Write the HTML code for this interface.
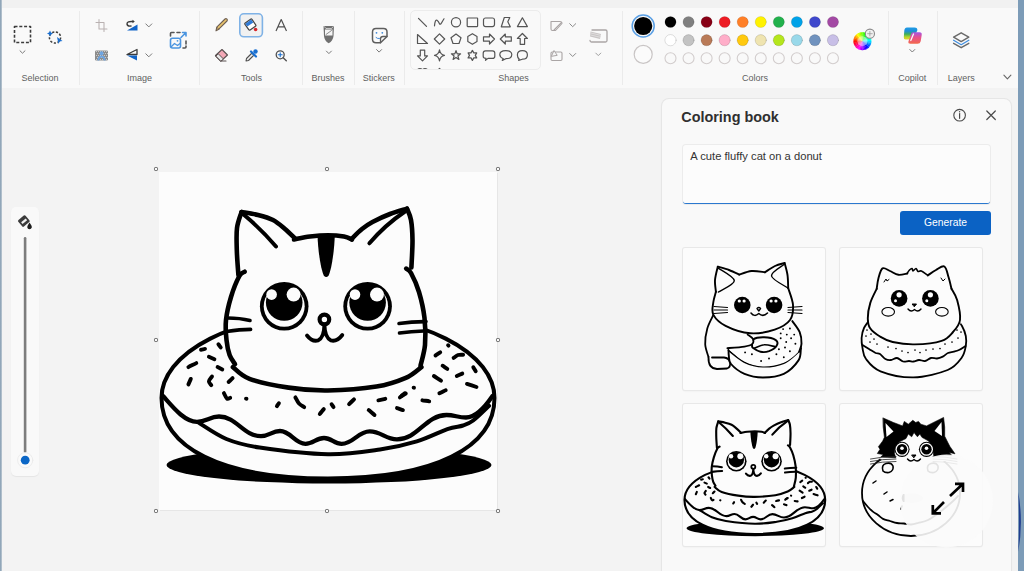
<!DOCTYPE html>
<html><head><meta charset="utf-8">
<style>
html,body{margin:0;padding:0;width:1024px;height:571px;overflow:hidden;background:#f3f3f3;font-family:"Liberation Sans",sans-serif;}
.abs{position:absolute;}
#topstrip{left:0;top:0;width:1024px;height:8px;background:#f1f1f1;}
#toolbar{left:0;top:8px;width:1024px;height:80px;background:#f9f9f9;}
.sep{position:absolute;top:10.5px;width:1px;height:74px;background:#ebebeb;}
.lbl{position:absolute;top:72.5px;font-size:9px;color:#5f5f5f;white-space:nowrap;transform:translateX(-50%);}
#leftedge{left:0;top:0;width:2px;height:571px;background:linear-gradient(90deg,#90a6b9 0%,#93a8ba 55%,#d3dae0 100%);}
#rightedge{left:1018px;top:0;width:6px;height:571px;background:#7d9cb8;}
#canvas{left:159px;top:172px;width:338px;height:338px;background:#fcfcfc;box-shadow:1px 1px 0 0 #e6e6e6;}
.handle{position:absolute;width:2px;height:2px;border:1.8px solid #676767;background:#fafafa;border-radius:1.2px;}
#slider{left:11px;top:207px;width:28px;height:269px;background:#f9f9f9;border-radius:5px;box-shadow:0 1px 1px rgba(0,0,0,0.06);}
#panel{left:662px;top:99px;width:349px;height:480px;background:#f9f9f9;border-radius:7px;box-shadow:0 0 0 1px #e6e6e6, 0 1px 3px rgba(0,0,0,0.05);}
#title{left:681.3px;top:108.8px;font-size:14.4px;font-weight:bold;color:#303030;letter-spacing:0px;}
#ta{left:683px;top:145px;width:307px;height:58px;background:#fcfcfc;border-radius:3px;box-shadow:0 0 0 1px #ececec;border-bottom:1.5px solid #2a78cf;}
#tatext{left:690.3px;top:150px;font-size:11.2px;color:#333;}
#gen{left:900px;top:211px;width:91px;height:24px;background:#0b62c4;border-radius:3px;color:#fff;font-size:10.3px;text-align:center;line-height:24px;}
.thumb{position:absolute;width:142px;height:142px;background:#fcfcfc;border-radius:2px;box-shadow:0 0 0 1px #e8e8e8, 0 1px 2px rgba(0,0,0,0.08);}
svg{position:absolute;left:0;top:0;}
.t3 path{stroke-width:5px;}
</style></head>
<body>
<div id="topstrip" class="abs"></div>
<div id="toolbar" class="abs"></div>
<div class="sep" style="left:79px"></div>
<div class="sep" style="left:199px"></div>
<div class="sep" style="left:302px"></div>
<div class="sep" style="left:354px"></div>
<div class="sep" style="left:404px"></div>
<div class="sep" style="left:622px"></div>
<div class="sep" style="left:888px"></div>
<div class="sep" style="left:937px"></div>
<div class="lbl" style="left:40px">Selection</div>
<div class="lbl" style="left:139.4px">Image</div>
<div class="lbl" style="left:251.4px">Tools</div>
<div class="lbl" style="left:328px">Brushes</div>
<div class="lbl" style="left:378.8px">Stickers</div>
<div class="lbl" style="left:513.4px">Shapes</div>
<div class="lbl" style="left:755px">Colors</div>
<div class="lbl" style="left:912.2px">Copilot</div>
<div class="lbl" style="left:961.3px">Layers</div>
<div id="leftedge" class="abs"></div>
<div id="rightedge" class="abs"></div>

<div id="canvas" class="abs"></div>
<div class="handle" style="left:153.7px;top:167.2px"></div>
<div class="handle" style="left:325.2px;top:167.2px"></div>
<div class="handle" style="left:496.0px;top:167.2px"></div>
<div class="handle" style="left:153.7px;top:338.2px"></div>
<div class="handle" style="left:496.0px;top:338.2px"></div>
<div class="handle" style="left:153.7px;top:508.9px"></div>
<div class="handle" style="left:325.2px;top:508.9px"></div>
<div class="handle" style="left:496.0px;top:508.9px"></div>

<div id="slider" class="abs"></div>

<div id="panel" class="abs"></div>
<div id="title" class="abs">Coloring book</div>
<div id="ta" class="abs"></div>
<div id="tatext" class="abs">A cute fluffy cat on a donut</div>
<div id="gen" class="abs">Generate</div>
<div class="thumb" style="left:683px;top:248px"></div>
<div class="thumb" style="left:840px;top:248px"></div>
<div class="thumb" style="left:683px;top:404px"></div>
<div class="thumb" style="left:840px;top:404px"></div>

<svg width="1024" height="571" viewBox="0 0 1024 571" stroke-linecap="round" stroke-linejoin="round">
<rect x="14.5" y="26.5" width="16" height="16" fill="none" stroke="#3c3c3c" stroke-width="1.6" stroke-dasharray="3,1.8" stroke-linecap="butt"/>
<path d="M20.0,50.8 L22.5,53.2 L25.0,50.8" fill="none" stroke="#7a7a7a" stroke-width="1"/>
<circle cx="55" cy="37.5" r="5.6" fill="none" stroke="#3c3c3c" stroke-width="1.5" stroke-dasharray="2.2,1.6" stroke-linecap="butt"/>
<path d="M50,30.5 L51,32.5 L53,33.5 L51,34.5 L50,36.5 L49,34.5 L47,33.5 L49,32.5Z" fill="#1a6fd0"/>
<path d="M57,37 L62.5,41 L59.5,41.5 L58.5,44 Z" fill="#1a6fd0"/>
<path d="M99,19.5 L99,29 L107,29 M96,22.5 L104,22.5 L104,31.5" fill="none" stroke="#b9b1b1" stroke-width="1.05"/>
<path d="M127,30.5 L137.5,30.5 L137.5,24.5 Z" fill="#1164c8"/>
<path d="M133,21.5 Q127,21 127,24 Q127.5,26.5 131,26" fill="none" stroke="#3a3a3a" stroke-width="1.4"/>
<path d="M132.5,19.8 L134.8,21.5 L132.5,23.2Z" fill="#3a3a3a"/>
<path d="M145.8,23.9 L148.8,26.9 L151.8,23.9" fill="none" stroke="#7a7a7a" stroke-width="1"/>
<rect x="95" y="50.5" width="13" height="10" fill="#8c8c8c" rx="1.2"/>
<rect x="96.0" y="51.0" width="1" height="1" fill="#c9c9c9"/>
<rect x="98.0" y="51.0" width="1" height="1" fill="#c9c9c9"/>
<rect x="100.0" y="51.0" width="1" height="1" fill="#c9c9c9"/>
<rect x="102.0" y="51.0" width="1" height="1" fill="#c9c9c9"/>
<rect x="104.0" y="51.0" width="1" height="1" fill="#c9c9c9"/>
<rect x="106.0" y="51.0" width="1" height="1" fill="#c9c9c9"/>
<rect x="97.0" y="53.0" width="1" height="1" fill="#c9c9c9"/>
<rect x="99.0" y="53.0" width="1" height="1" fill="#c9c9c9"/>
<rect x="101.0" y="53.0" width="1" height="1" fill="#c9c9c9"/>
<rect x="103.0" y="53.0" width="1" height="1" fill="#c9c9c9"/>
<rect x="105.0" y="53.0" width="1" height="1" fill="#c9c9c9"/>
<rect x="107.0" y="53.0" width="1" height="1" fill="#c9c9c9"/>
<rect x="96.0" y="55.0" width="1" height="1" fill="#c9c9c9"/>
<rect x="98.0" y="55.0" width="1" height="1" fill="#c9c9c9"/>
<rect x="100.0" y="55.0" width="1" height="1" fill="#c9c9c9"/>
<rect x="102.0" y="55.0" width="1" height="1" fill="#c9c9c9"/>
<rect x="104.0" y="55.0" width="1" height="1" fill="#c9c9c9"/>
<rect x="106.0" y="55.0" width="1" height="1" fill="#c9c9c9"/>
<rect x="97.0" y="57.0" width="1" height="1" fill="#c9c9c9"/>
<rect x="99.0" y="57.0" width="1" height="1" fill="#c9c9c9"/>
<rect x="101.0" y="57.0" width="1" height="1" fill="#c9c9c9"/>
<rect x="103.0" y="57.0" width="1" height="1" fill="#c9c9c9"/>
<rect x="105.0" y="57.0" width="1" height="1" fill="#c9c9c9"/>
<rect x="107.0" y="57.0" width="1" height="1" fill="#c9c9c9"/>
<rect x="96.0" y="59.0" width="1" height="1" fill="#c9c9c9"/>
<rect x="98.0" y="59.0" width="1" height="1" fill="#c9c9c9"/>
<rect x="100.0" y="59.0" width="1" height="1" fill="#c9c9c9"/>
<rect x="102.0" y="59.0" width="1" height="1" fill="#c9c9c9"/>
<rect x="104.0" y="59.0" width="1" height="1" fill="#c9c9c9"/>
<rect x="106.0" y="59.0" width="1" height="1" fill="#c9c9c9"/>
<circle cx="101.5" cy="53.3" r="2" fill="#6fa5e0"/>
<path d="M97.5,60.5 Q97.5,55.5 101.5,55.5 Q105.5,55.5 105.5,60.5 L103.7,60.5 Q103.7,57.5 101.5,57.5 Q99.3,57.5 99.3,60.5Z" fill="#6fa5e0"/>
<path d="M137,49.5 L137,54.5 L127,54.5 Z" fill="none" stroke="#3a3a3a" stroke-width="1.3"/>
<path d="M127,55.5 L137,55.5 L137,60.5 Z" fill="#1164c8"/>
<path d="M145.8,53.8 L148.8,56.8 L151.8,53.8" fill="none" stroke="#7a7a7a" stroke-width="1"/>
<path d="M170.5,36 L170.5,33.5 Q170.5,32.5 171.5,32.5 L174,32.5 M177,32.5 L180,32.5 M186,41 L186,44 M186,46 L186,47 Q186,48 185,48 L183,48" fill="none" stroke="#555" stroke-width="1.6"/>
<rect x="170.5" y="38.3" width="10" height="9.7" rx="2" fill="none" stroke="#4b95e0" stroke-width="1.6"/>
<path d="M171.5,46.5 L174.5,43.5 L177.5,45.5 L180,43.5" fill="none" stroke="#4b95e0" stroke-width="1.3"/>
<circle cx="177.5" cy="40.8" r="0.9" fill="#4b95e0"/>
<path d="M181,37.5 L186,32.5 M182.5,32.5 L186,32.5 L186,36" fill="none" stroke="#4b95e0" stroke-width="1.6"/>
<rect x="239.8" y="13.8" width="22.6" height="23" rx="4" fill="#f1f1f1" stroke="#7fb2e6" stroke-width="1.6"/>
<path d="M216,30.8 L216.8,27.2 L225,19 Q226,18.2 227,19.2 Q227.8,20.2 227,21 L218.8,29.2 Z" fill="#e9c46d" stroke="#6e5f52" stroke-width="1.1"/>
<path d="M216.8,27.2 L218.8,29.2" stroke="#6e5f52" stroke-width="0.9"/>
<g transform="rotate(-35 250 24.5)"><rect x="246" y="20.5" width="8.5" height="8.5" rx="1" fill="#fff" stroke="#444" stroke-width="1.2"/><rect x="246.6" y="21.2" width="7.3" height="3.5" fill="#2f7ad6"/></g>
<circle cx="255.6" cy="29.5" r="1.8" fill="#d8252a"/>
<path d="M276,31 L281.2,19.5 L286.5,31 M278,26.8 L284.5,26.8" fill="none" stroke="#505050" stroke-width="1.2" stroke-linecap="butt"/>
<path d="M215.5,55.5 L222,49.5 L227.5,55 L221,61 Z" fill="#f2a8b6" stroke="#5a5050" stroke-width="1.1"/>
<path d="M215.5,55.5 L219,59 L221,61 L226,61" fill="none" stroke="#5a5050" stroke-width="1.1"/>
<path d="M216,56 L218.3,53.8 L223.5,59 L221,61 Z" fill="#e8e8e8" stroke="#5a5050" stroke-width="1"/>
<path d="M246,61 L246.5,58.5 L252,53 L254,55 L248.5,60.5 Z" fill="#f0f0f0" stroke="#505050" stroke-width="1.1"/>
<path d="M251,51.5 L256,56.5" stroke="#1a6fd0" stroke-width="2.2"/>
<circle cx="255.5" cy="51.5" r="2.2" fill="#1a6fd0"/>
<circle cx="280.2" cy="54.8" r="4" fill="none" stroke="#505050" stroke-width="1.3"/>
<path d="M283.2,57.8 L286.3,60.8" stroke="#505050" stroke-width="1.4"/>
<path d="M280.2,52.8 L280.2,56.8 M278.2,54.8 L282.2,54.8" stroke="#1a6fd0" stroke-width="1.1"/>
<path d="M323.5,26 L334,26 L333.5,36 Q333,41 328.7,43.2 Q324.4,41 324,36 Z" fill="#707070"/>
<path d="M325,29.5 L332.5,29.5 L332.5,35.5 L325,35.5 Z" fill="#f4f4f4"/>
<path d="M326,34.5 L331.5,30.5" stroke="#707070" stroke-width="0.8"/>
<path d="M324.2,26.5 L326,28.5 L331.5,28.5 L333.3,26.5" fill="none" stroke="#fff" stroke-width="0.6"/>
<path d="M326.4,51.1 L328.9,53.6 L331.4,51.1" fill="none" stroke="#7a7a7a" stroke-width="1"/>
<path d="M376,28.5 L383.5,28.5 Q387,28.5 387,32 L387,36.5 L380.5,42.8 L376,42.8 Q372.5,42.8 372.5,39.3 L372.5,32 Q372.5,28.5 376,28.5 Z" fill="#fbfbfb" stroke="#5e5e5e" stroke-width="1.5"/>
<path d="M380.5,42.8 L380.5,39 Q380.5,36.5 383,36.5 L387,36.5" fill="none" stroke="#5e5e5e" stroke-width="1.3"/>
<circle cx="376.5" cy="32.8" r="0.9" fill="#3f88d8"/><circle cx="382.3" cy="32.8" r="0.9" fill="#3f88d8"/>
<path d="M376,37.5 Q377.5,39 379.5,38.5" fill="none" stroke="#3f88d8" stroke-width="1"/>
<path d="M376.6,49.6 L379.1,52.1 L381.6,49.6" fill="none" stroke="#7a7a7a" stroke-width="1"/>
<rect x="410.5" y="10.5" width="130" height="59" rx="4.5" fill="#f9f9f9" stroke="#ececec" stroke-width="1"/>
<clipPath id="shpclip"><rect x="411" y="11" width="129" height="58"/></clipPath><g clip-path="url(#shpclip)">
<g transform="translate(422.5,22.3)"><path d="M-4,-4 L4,4" fill="none" stroke="#555" stroke-width="1.2"/></g>
<g transform="translate(439.5,22.3)"><path d="M-5,3.5 Q-4.5,-3 -2.5,-2 Q-1,-1 0,1.5 Q1,3 3,-1 L4.5,-3.5" fill="none" stroke="#555" stroke-width="1.2"/></g>
<g transform="translate(456.0,22.3)"><circle r="4.6" fill="none" stroke="#555" stroke-width="1.2"/></g>
<g transform="translate(472.4,22.3)"><rect x="-5.2" y="-4.3" width="10.4" height="8.6" rx="0.5" fill="none" stroke="#555" stroke-width="1.2"/></g>
<g transform="translate(489.0,22.3)"><rect x="-5.5" y="-4.3" width="11" height="8.6" rx="2" fill="none" stroke="#555" stroke-width="1.2"/></g>
<g transform="translate(505.8,22.3)"><path d="M-4.5,4.5 L-1.5,-4.8 L4,-4.8 L2,-0.5 L4.5,4.5 Z" fill="none" stroke="#555" stroke-width="1.2"/></g>
<g transform="translate(522.4,22.3)"><path d="M0,-4.5 L5,4.3 L-5,4.3 Z" fill="none" stroke="#555" stroke-width="1.2"/></g>
<g transform="translate(422.5,39.0)"><path d="M-5,-4.5 L5,4.5 L-5,4.5 Z" fill="none" stroke="#555" stroke-width="1.2"/></g>
<g transform="translate(439.5,39.0)"><path d="M0,-5.2 L5.2,0 L0,5.2 L-5.2,0 Z" fill="none" stroke="#555" stroke-width="1.2"/></g>
<g transform="translate(456.0,39.0)"><path d="M0,-5 L5,-1.3 L3,4.5 L-3,4.5 L-5,-1.3 Z" fill="none" stroke="#555" stroke-width="1.2"/></g>
<g transform="translate(472.4,39.0)"><path d="M0,-5.3 L4.6,-2.6 L4.6,2.6 L0,5.3 L-4.6,2.6 L-4.6,-2.6 Z" fill="none" stroke="#555" stroke-width="1.2"/></g>
<g transform="translate(489.0,39.0)"><path d="M-5.5,-2.2 L0.5,-2.2 L0.5,-5 L5.5,0 L0.5,5 L0.5,2.2 L-5.5,2.2 Z" fill="none" stroke="#555" stroke-width="1.2"/></g>
<g transform="translate(505.8,39.0)"><path d="M5.5,-2.2 L-0.5,-2.2 L-0.5,-5 L-5.5,0 L-0.5,5 L-0.5,2.2 L5.5,2.2 Z" fill="none" stroke="#555" stroke-width="1.2"/></g>
<g transform="translate(522.4,39.0)"><path d="M-2.2,5.3 L-2.2,-0.5 L-5,-0.5 L0,-5.5 L5,-0.5 L2.2,-0.5 L2.2,5.3 Z" fill="none" stroke="#555" stroke-width="1.2"/></g>
<g transform="translate(422.5,55.4)"><path d="M-2.2,-5.3 L-2.2,0.5 L-5,0.5 L0,5.5 L5,0.5 L2.2,0.5 L2.2,-5.3 Z" fill="none" stroke="#555" stroke-width="1.2"/></g>
<g transform="translate(439.5,55.4)"><path d="M0,-5.5 Q0.8,-0.8 5,0 Q0.8,0.8 0,5.5 Q-0.8,0.8 -5,0 Q-0.8,-0.8 0,-5.5Z" fill="none" stroke="#555" stroke-width="1.2"/></g>
<g transform="translate(456.0,55.4)"><path d="M0,-4.8 L1.2,-1.5 L4.6,-1.5 L1.9,0.6 L2.9,4 L0,2 L-2.9,4 L-1.9,0.6 L-4.6,-1.5 L-1.2,-1.5 Z" fill="none" stroke="#555" stroke-width="1.2"/></g>
<g transform="translate(472.4,55.4)"><path d="M0,-5 L1.4,-2.5 L4.3,-2.5 L2.9,0 L4.3,2.5 L1.4,2.5 L0,5 L-1.4,2.5 L-4.3,2.5 L-2.9,0 L-4.3,-2.5 L-1.4,-2.5 Z" fill="none" stroke="#555" stroke-width="1.2"/></g>
<g transform="translate(489.0,55.4)"><path d="M-3.5,-4.5 L3.5,-4.5 Q5.8,-4.5 5.8,-2.2 L5.8,0.8 Q5.8,3 3.5,3 L-1,3 L-3.5,5 L-3,3 Q-5.8,3 -5.8,0.8 L-5.8,-2.2 Q-5.8,-4.5 -3.5,-4.5Z" fill="none" stroke="#555" stroke-width="1.2"/></g>
<g transform="translate(505.8,55.4)"><path d="M-2.5,3.3 Q-6,2 -6,-0.8 Q-6,-4.7 0,-4.7 Q6,-4.7 6,-0.8 Q6,3.3 0,3.3 L-3.5,5 Z" fill="none" stroke="#555" stroke-width="1.2"/></g>
<g transform="translate(522.4,55.4)"><path d="M-3.3,3.6 Q-5,2 -5,-0.5 Q-5,-4.7 0,-4.7 Q5,-4.7 5,-0.5 Q5,3.8 0,3.8 L-3.8,5 Z" fill="none" stroke="#555" stroke-width="1.2"/></g>
<g transform="translate(422.5,70.5)"><path d="M-5,1 Q-5,-2 -2.5,-2 Q-1,-2 0,-0.5 Q1,-2 2.5,-2 Q5,-2 5,1" fill="none" stroke="#555" stroke-width="1.2"/></g>
<g transform="translate(439.5,70.5)"><path d="M-3,1 L0,-2 L1,-1" fill="none" stroke="#555" stroke-width="1.2"/></g>
</g>
<path d="M551,21.5 L560,21.5 Q562,21.5 562,23.5 L555.5,30.5 L552.5,30.5 Q551,30.5 551,29 Z" fill="none" stroke="#aaa5a5" stroke-width="1.1"/>
<path d="M554,30 L561.5,22.5" stroke="#aaa5a5" stroke-width="1.1"/>
<path d="M569.7,23.7 L572.7,26.7 L575.7,23.7" fill="none" stroke="#8a8a8a" stroke-width="1"/>
<rect x="551" y="52" width="11" height="8.5" rx="1.2" fill="none" stroke="#aaa5a5" stroke-width="1.1"/>
<path d="M551.5,56 L554,50.5 L557,55 Z" fill="#f6f6f6" stroke="#aaa5a5" stroke-width="1"/>
<path d="M569.7,53.5 L572.7,56.5 L575.7,53.5" fill="none" stroke="#8a8a8a" stroke-width="1"/>
<path d="M592,30 L605.5,30 Q607,30 607,31.5 L607,40.5 Q607,42 605.5,42 L591.5,42 Q590,42 590,40.5" fill="none" stroke="#aaa5a5" stroke-width="1.3"/>
<path d="M590.5,31.5 L601,34 L600,39 L590,36.5 Z" fill="#c8c4c4"/>
<path d="M591,33 L600.5,35.3 M590.8,35 L600,37.2" stroke="#eee" stroke-width="0.6"/>
<path d="M595.8,53.1 L598.3,55.6 L600.8,53.1" fill="none" stroke="#a0a0a0" stroke-width="1"/>
<circle cx="643.2" cy="26" r="11" fill="none" stroke="#5a9fe4" stroke-width="1.5"/>
<circle cx="643.2" cy="26" r="9.1" fill="#000"/>
<circle cx="643.2" cy="54.4" r="9" fill="#fbfbfb" stroke="#c9c5c5" stroke-width="1.2"/>
<circle cx="670.50" cy="22" r="5.6" fill="#000000" stroke="rgba(0,0,0,0.12)" stroke-width="0.8"/>
<circle cx="670.50" cy="40.2" r="5.6" fill="#ffffff" stroke="rgba(0,0,0,0.16)" stroke-width="0.8"/>
<circle cx="670.50" cy="58.3" r="5.5" fill="none" stroke="#d2cdcd" stroke-width="1.1"/>
<circle cx="688.55" cy="22" r="5.6" fill="#7f7f7f" stroke="rgba(0,0,0,0.12)" stroke-width="0.8"/>
<circle cx="688.55" cy="40.2" r="5.6" fill="#c3c3c3" stroke="rgba(0,0,0,0.16)" stroke-width="0.8"/>
<circle cx="688.55" cy="58.3" r="5.5" fill="none" stroke="#d2cdcd" stroke-width="1.1"/>
<circle cx="706.60" cy="22" r="5.6" fill="#880015" stroke="rgba(0,0,0,0.12)" stroke-width="0.8"/>
<circle cx="706.60" cy="40.2" r="5.6" fill="#b97a57" stroke="rgba(0,0,0,0.16)" stroke-width="0.8"/>
<circle cx="706.60" cy="58.3" r="5.5" fill="none" stroke="#d2cdcd" stroke-width="1.1"/>
<circle cx="724.65" cy="22" r="5.6" fill="#ed1c24" stroke="rgba(0,0,0,0.12)" stroke-width="0.8"/>
<circle cx="724.65" cy="40.2" r="5.6" fill="#ffaec9" stroke="rgba(0,0,0,0.16)" stroke-width="0.8"/>
<circle cx="724.65" cy="58.3" r="5.5" fill="none" stroke="#d2cdcd" stroke-width="1.1"/>
<circle cx="742.70" cy="22" r="5.6" fill="#ff7f27" stroke="rgba(0,0,0,0.12)" stroke-width="0.8"/>
<circle cx="742.70" cy="40.2" r="5.6" fill="#ffc90e" stroke="rgba(0,0,0,0.16)" stroke-width="0.8"/>
<circle cx="742.70" cy="58.3" r="5.5" fill="none" stroke="#d2cdcd" stroke-width="1.1"/>
<circle cx="760.75" cy="22" r="5.6" fill="#fff200" stroke="rgba(0,0,0,0.12)" stroke-width="0.8"/>
<circle cx="760.75" cy="40.2" r="5.6" fill="#efe4b0" stroke="rgba(0,0,0,0.16)" stroke-width="0.8"/>
<circle cx="760.75" cy="58.3" r="5.5" fill="none" stroke="#d2cdcd" stroke-width="1.1"/>
<circle cx="778.80" cy="22" r="5.6" fill="#22b14c" stroke="rgba(0,0,0,0.12)" stroke-width="0.8"/>
<circle cx="778.80" cy="40.2" r="5.6" fill="#b5e61d" stroke="rgba(0,0,0,0.16)" stroke-width="0.8"/>
<circle cx="778.80" cy="58.3" r="5.5" fill="none" stroke="#d2cdcd" stroke-width="1.1"/>
<circle cx="796.85" cy="22" r="5.6" fill="#00a2e8" stroke="rgba(0,0,0,0.12)" stroke-width="0.8"/>
<circle cx="796.85" cy="40.2" r="5.6" fill="#99d9ea" stroke="rgba(0,0,0,0.16)" stroke-width="0.8"/>
<circle cx="796.85" cy="58.3" r="5.5" fill="none" stroke="#d2cdcd" stroke-width="1.1"/>
<circle cx="814.90" cy="22" r="5.6" fill="#3f48cc" stroke="rgba(0,0,0,0.12)" stroke-width="0.8"/>
<circle cx="814.90" cy="40.2" r="5.6" fill="#7092be" stroke="rgba(0,0,0,0.16)" stroke-width="0.8"/>
<circle cx="814.90" cy="58.3" r="5.5" fill="none" stroke="#d2cdcd" stroke-width="1.1"/>
<circle cx="832.95" cy="22" r="5.6" fill="#a349a4" stroke="rgba(0,0,0,0.12)" stroke-width="0.8"/>
<circle cx="832.95" cy="40.2" r="5.6" fill="#c8bfe7" stroke="rgba(0,0,0,0.16)" stroke-width="0.8"/>
<circle cx="832.95" cy="58.3" r="5.5" fill="none" stroke="#d2cdcd" stroke-width="1.1"/>
<path d="M862.40,41.20 L862.27,32.20 A9.0,9.0 0 0 1 864.09,32.36 Z" fill="#54ff00"/>
<path d="M862.40,41.20 L863.84,32.32 A9.0,9.0 0 0 1 865.60,32.79 Z" fill="#2aff00"/>
<path d="M862.40,41.20 L865.36,32.70 A9.0,9.0 0 0 1 867.01,33.47 Z" fill="#00ff00"/>
<path d="M862.40,41.20 L866.79,33.34 A9.0,9.0 0 0 1 868.28,34.39 Z" fill="#00ff2a"/>
<path d="M862.40,41.20 L868.09,34.23 A9.0,9.0 0 0 1 869.37,35.51 Z" fill="#00ff55"/>
<path d="M862.40,41.20 L869.21,35.32 A9.0,9.0 0 0 1 870.26,36.81 Z" fill="#00ff7f"/>
<path d="M862.40,41.20 L870.13,36.59 A9.0,9.0 0 0 1 870.90,38.24 Z" fill="#00ffa9"/>
<path d="M862.40,41.20 L870.81,38.00 A9.0,9.0 0 0 1 871.28,39.76 Z" fill="#00ffd4"/>
<path d="M862.40,41.20 L871.24,39.51 A9.0,9.0 0 0 1 871.40,41.33 Z" fill="#00ffff"/>
<path d="M862.40,41.20 L871.40,41.07 A9.0,9.0 0 0 1 871.24,42.89 Z" fill="#00d4ff"/>
<path d="M862.40,41.20 L871.28,42.64 A9.0,9.0 0 0 1 870.81,44.40 Z" fill="#00a9ff"/>
<path d="M862.40,41.20 L870.90,44.16 A9.0,9.0 0 0 1 870.13,45.81 Z" fill="#007fff"/>
<path d="M862.40,41.20 L870.26,45.59 A9.0,9.0 0 0 1 869.21,47.08 Z" fill="#0054ff"/>
<path d="M862.40,41.20 L869.37,46.89 A9.0,9.0 0 0 1 868.09,48.17 Z" fill="#002aff"/>
<path d="M862.40,41.20 L868.28,48.01 A9.0,9.0 0 0 1 866.79,49.06 Z" fill="#0000ff"/>
<path d="M862.40,41.20 L867.01,48.93 A9.0,9.0 0 0 1 865.36,49.70 Z" fill="#2a00ff"/>
<path d="M862.40,41.20 L865.60,49.61 A9.0,9.0 0 0 1 863.84,50.08 Z" fill="#5400ff"/>
<path d="M862.40,41.20 L864.09,50.04 A9.0,9.0 0 0 1 862.27,50.20 Z" fill="#7f00ff"/>
<path d="M862.40,41.20 L862.53,50.20 A9.0,9.0 0 0 1 860.71,50.04 Z" fill="#aa00ff"/>
<path d="M862.40,41.20 L860.96,50.08 A9.0,9.0 0 0 1 859.20,49.61 Z" fill="#d400ff"/>
<path d="M862.40,41.20 L859.44,49.70 A9.0,9.0 0 0 1 857.79,48.93 Z" fill="#ff00ff"/>
<path d="M862.40,41.20 L858.01,49.06 A9.0,9.0 0 0 1 856.52,48.01 Z" fill="#ff00d4"/>
<path d="M862.40,41.20 L856.71,48.17 A9.0,9.0 0 0 1 855.43,46.89 Z" fill="#ff00aa"/>
<path d="M862.40,41.20 L855.59,47.08 A9.0,9.0 0 0 1 854.54,45.59 Z" fill="#ff007f"/>
<path d="M862.40,41.20 L854.67,45.81 A9.0,9.0 0 0 1 853.90,44.16 Z" fill="#ff0055"/>
<path d="M862.40,41.20 L853.99,44.40 A9.0,9.0 0 0 1 853.52,42.64 Z" fill="#ff002a"/>
<path d="M862.40,41.20 L853.56,42.89 A9.0,9.0 0 0 1 853.40,41.07 Z" fill="#ff0000"/>
<path d="M862.40,41.20 L853.40,41.33 A9.0,9.0 0 0 1 853.56,39.51 Z" fill="#ff2a00"/>
<path d="M862.40,41.20 L853.52,39.76 A9.0,9.0 0 0 1 853.99,38.00 Z" fill="#ff5400"/>
<path d="M862.40,41.20 L853.90,38.24 A9.0,9.0 0 0 1 854.67,36.59 Z" fill="#ff7f00"/>
<path d="M862.40,41.20 L854.54,36.81 A9.0,9.0 0 0 1 855.59,35.32 Z" fill="#ffaa00"/>
<path d="M862.40,41.20 L855.43,35.51 A9.0,9.0 0 0 1 856.71,34.23 Z" fill="#ffd400"/>
<path d="M862.40,41.20 L856.52,34.39 A9.0,9.0 0 0 1 858.01,33.34 Z" fill="#ffff00"/>
<path d="M862.40,41.20 L857.79,33.47 A9.0,9.0 0 0 1 859.44,32.70 Z" fill="#d4ff00"/>
<path d="M862.40,41.20 L859.20,32.79 A9.0,9.0 0 0 1 860.96,32.32 Z" fill="#aaff00"/>
<path d="M862.40,41.20 L860.71,32.36 A9.0,9.0 0 0 1 862.53,32.20 Z" fill="#7fff00"/>
<circle cx="862.4" cy="41.2" r="5" fill="rgba(255,255,255,0.45)"/>
<circle cx="869.9" cy="33.7" r="4.6" fill="#f0f0f0" stroke="#8a8a8a" stroke-width="1.1"/>
<path d="M869.9,31.4 L869.9,36 M867.6,33.7 L872.2,33.7" stroke="#999" stroke-width="0.8"/>
<defs><linearGradient id="cpL" x1="0" y1="0" x2="0" y2="1"><stop offset="0" stop-color="#1e9be6"/><stop offset="0.3" stop-color="#1f8fd8"/><stop offset="0.55" stop-color="#3fae5a"/><stop offset="0.8" stop-color="#b6d62a"/><stop offset="1" stop-color="#e8d030"/></linearGradient><linearGradient id="cpR" x1="0" y1="0" x2="0" y2="1"><stop offset="0" stop-color="#a455e6"/><stop offset="0.45" stop-color="#e8508c"/><stop offset="1" stop-color="#f36a4a"/></linearGradient></defs>
<path d="M907,27.5 L914.5,27.5 Q917.8,27.5 917.3,30.5 L913.5,38 Q912.5,39.5 910.5,39.5 L905.5,39.5 Q903.6,39.5 903.8,37.3 L904.3,30.5 Q904.7,27.5 907,27.5Z" fill="url(#cpL)"/>
<path d="M913,32.2 L919.5,32.2 Q922.2,32.2 921.7,35 L920.7,41.2 Q920.2,43.8 917.5,43.8 L910.5,43.8 Q907.8,43.8 908.5,41.3 L911,34.3 Q911.6,32.2 913,32.2Z" fill="url(#cpR)"/>
<path d="M913.5,34 L910.8,40.5" stroke="#fafafa" stroke-width="1.3"/>
<path d="M909.8,49.5 L912.3,52.0 L914.8,49.5" fill="none" stroke="#7a7a7a" stroke-width="1"/>
<path d="M961.2,32.8 L968.8,37.2 L961.2,41.6 L953.6,37.2 Z" fill="none" stroke="#6a6a6a" stroke-width="1.4"/>
<path d="M953.6,40.3 L961.2,44.7 L968.8,40.3" fill="none" stroke="#3f8ee0" stroke-width="1.3"/>
<path d="M953.6,43.3 L961.2,47.7 L968.8,43.3" fill="none" stroke="#6a6a6a" stroke-width="1.4"/>
<path d="M1003.9,75.2 L1007.4,78.8 L1010.9,75.2" fill="none" stroke="#666" stroke-width="1.1"/>
<!-- slider -->
<g transform="rotate(-40 23.5 221)"><rect x="19" y="217" width="9.5" height="8.5" rx="1.3" fill="#3c3c3c"/><rect x="20.8" y="220.5" width="6" height="2.2" fill="#f2f2f2"/></g>
<path d="M29.5,222.5 Q32.2,226 31.8,227.5 Q31.2,229.3 29.5,229.3 Q27.6,229.3 27.3,227.5 Q27,226 29.5,222.5Z" fill="#1e1e1e"/>
<rect x="23.8" y="237" width="2.6" height="216" rx="1.3" fill="#7d7d7d"/>
<circle cx="25.2" cy="460.2" r="7.6" fill="#fafafa" stroke="#e8e8e8" stroke-width="0.8"/>
<circle cx="25.2" cy="460.2" r="4.4" fill="#0b66c6"/>
<!-- panel icons -->
<circle cx="959.6" cy="115.2" r="5.8" fill="none" stroke="#4a4a4a" stroke-width="1.1"/>
<path d="M959.6,113.6 L959.6,118.3" stroke="#4a4a4a" stroke-width="1.2"/>
<circle cx="959.6" cy="111.8" r="0.7" fill="#4a4a4a"/>
<path d="M986.8,111 L995.3,119.5 M995.3,111 L986.8,119.5" stroke="#4a4a4a" stroke-width="1.2"/>
<!-- right edge arc -->
<path d="M1018.3,492 Q1023.5,522 1018.3,552 Q1019.8,522 1018.3,492 Z" fill="#1f3d8f"/>
<!-- main drawing -->
<g id="main">
<ellipse cx="329" cy="465" rx="162.5" ry="18.5" fill="#000"/>
<path d="M161.5,398 A166.5,84 0 0 1 494.5,398 C494.5,447 436,478.5 328,478.5 C220,478.5 161.5,447 161.5,398 Z" fill="#fcfcfc" stroke="#000" stroke-width="4"/>
<path d="M163,396 C172,406 184,421.8 197,421.8 C206.2,421.8 209.8,416.5 219.0,416.5 C236.6,416.5 243.4,436.2 261.0,436.2 C269.0,436.2 272.0,431.0 280.0,431.0 C290.7,431.0 294.8,443.8 305.5,443.8 C313.3,443.8 316.2,438.0 324.0,438.0 C331.4,438.0 334.2,443.9 341.6,443.9 C353.4,443.9 357.9,431.4 369.7,431.4 C381.2,431.4 385.5,439.4 397.0,439.4 C417.8,439.4 425.7,415.0 446.5,415.0 C454.7,415.0 457.8,417.5 466.0,417.5 C475,417.5 483,410 492.5,396" fill="none" stroke="#000" stroke-width="4.3"/>
<path d="M198.2,422.4 C202.9,425.2 216.2,434.8 226.4,439.0 C236.6,443.2 242.7,445.0 259.6,447.5 C276.5,450.0 307.9,453.9 328.0,454.2 C348.1,454.5 365.2,451.6 380.0,449.5 C394.8,447.4 405.6,444.8 416.8,441.4 C428.0,438.0 439.7,431.8 447.4,429.1 C455.1,426.5 458.7,426.9 463.0,425.5 C467.3,424.1 468.8,423.8 473.2,420.5 C477.6,417.2 486.5,408.2 489.1,405.8" fill="none" stroke="#000" stroke-width="4"/>
<path d="M201.0,349.7 C201.7,349.6 204.3,349.0 205.0,348.9" fill="none" stroke="#000" stroke-width="3.9"/>
<path d="M218.4,344.2 C218.8,344.7 220.3,346.9 220.7,347.4" fill="none" stroke="#000" stroke-width="3.9"/>
<path d="M208.9,356.8 C209.8,357.2 213.5,358.8 214.4,359.2" fill="none" stroke="#000" stroke-width="3.9"/>
<path d="M188.4,367.1 C189.7,366.4 195.0,363.8 196.3,363.1" fill="none" stroke="#000" stroke-width="3.9"/>
<path d="M217.6,367.1 C218.4,367.5 221.5,369.0 222.3,369.4" fill="none" stroke="#000" stroke-width="3.9"/>
<path d="M188.4,384.4 C188.8,383.5 190.4,379.8 190.8,378.9" fill="none" stroke="#000" stroke-width="3.9"/>
<path d="M212.0,376.5 C211.5,377.3 209.0,379.9 208.9,381.3 C208.8,382.8 210.9,384.6 211.3,385.2" fill="none" stroke="#000" stroke-width="3.9"/>
<path d="M228.6,382.0 C229.3,381.4 231.9,378.8 232.6,378.1" fill="none" stroke="#000" stroke-width="3.9"/>
<path d="M223.9,393.1 C224.4,394.0 225.9,397.8 227.0,398.6 C228.1,399.4 229.7,397.9 230.2,397.8" fill="none" stroke="#000" stroke-width="3.9"/>
<path d="M246.0,398.6 C246.1,398.6 246.4,398.8 246.5,398.8" fill="none" stroke="#000" stroke-width="3.9"/>
<path d="M276.9,406.2 C277.2,405.7 278.6,403.7 278.9,403.2" fill="none" stroke="#000" stroke-width="3.9"/>
<path d="M295.4,397.4 C296.0,398.4 297.5,401.9 299.0,403.5 C300.5,405.1 303.3,406.5 304.2,407.1" fill="none" stroke="#000" stroke-width="3.9"/>
<path d="M319.8,414.0 C320.5,413.2 323.1,409.9 323.8,409.1" fill="none" stroke="#000" stroke-width="3.9"/>
<path d="M331.6,404.2 C331.9,404.7 333.2,406.6 333.5,407.1" fill="none" stroke="#000" stroke-width="3.9"/>
<path d="M349.1,404.2 C349.9,403.4 353.2,400.1 354.0,399.3" fill="none" stroke="#000" stroke-width="3.9"/>
<path d="M368.7,410.1 C369.7,410.9 373.5,414.2 374.5,415.0" fill="none" stroke="#000" stroke-width="3.9"/>
<path d="M378.4,400.3 C379.5,400.1 384.1,399.1 385.3,398.8" fill="none" stroke="#000" stroke-width="3.9"/>
<path d="M399.9,397.4 C400.9,396.8 404.8,394.1 405.8,393.5" fill="none" stroke="#000" stroke-width="3.9"/>
<path d="M397.0,408.1 C398.0,408.4 401.9,409.8 402.9,410.1" fill="none" stroke="#000" stroke-width="3.9"/>
<path d="M413.6,387.6 C413.7,387.6 413.9,387.8 414.0,387.8" fill="none" stroke="#000" stroke-width="3.9"/>
<path d="M422.4,400.3 C423.5,400.5 428.1,401.1 429.2,401.3" fill="none" stroke="#000" stroke-width="3.9"/>
<path d="M448.1,345.2 C448.2,345.3 448.4,345.5 448.5,345.6" fill="none" stroke="#000" stroke-width="3.9"/>
<path d="M435.5,355.5 C436.3,355.0 439.4,352.8 440.2,352.3" fill="none" stroke="#000" stroke-width="3.9"/>
<path d="M453.6,357.9 C454.3,357.4 456.4,355.5 458.0,355.0 C459.6,354.5 462.2,354.8 463.1,354.7" fill="none" stroke="#000" stroke-width="3.9"/>
<path d="M442.6,365.7 C443.4,366.2 446.5,368.4 447.3,368.9" fill="none" stroke="#000" stroke-width="3.9"/>
<path d="M473.3,367.3 C473.7,368.0 475.3,370.6 475.7,371.3" fill="none" stroke="#000" stroke-width="3.9"/>
<path d="M456.8,376.0 C457.7,375.6 461.4,374.0 462.3,373.6" fill="none" stroke="#000" stroke-width="3.9"/>
<path d="M433.9,376.0 C435.1,376.8 439.8,379.9 441.0,380.7" fill="none" stroke="#000" stroke-width="3.9"/>
<path d="M467.0,383.9 C468.6,384.4 474.9,386.5 476.5,387.0" fill="none" stroke="#000" stroke-width="3.9"/>
<path d="M439.4,393.3 C440.4,392.8 444.6,390.7 445.7,390.2" fill="none" stroke="#000" stroke-width="3.9"/>
<path d="M401.6,395.7 C402.1,395.3 404.2,393.7 404.7,393.3" fill="none" stroke="#000" stroke-width="3.9"/>
<path d="M241.5,212.0 C247.6,207.8 264.2,215.5 273.0,220.0 C281.8,224.5 288.3,236.3 294.0,239.0 C299.7,241.7 301.0,236.8 307.0,236.0 C313.0,235.2 322.6,233.5 330.0,234.0 C337.4,234.5 344.4,241.0 351.5,239.0 C358.6,237.0 363.2,227.1 372.5,222.0 C381.8,216.9 400.3,206.2 407.0,208.7 C413.7,211.2 411.8,227.1 412.5,237.0 C413.2,246.9 409.8,259.2 411.0,268.0 C412.2,276.8 417.7,281.3 420.0,290.0 C422.3,298.7 424.1,310.3 425.0,320.0 C425.9,329.7 425.9,340.8 425.2,348.4 C424.4,356.0 423.7,360.8 420.5,365.7 C417.3,370.6 413.1,374.4 405.8,377.9 C398.5,381.4 389.5,384.5 376.5,386.6 C363.5,388.7 342.3,390.3 327.7,390.5 C313.1,390.7 301.6,389.6 288.6,387.6 C275.6,385.7 258.8,382.2 249.5,378.8 C240.2,375.4 236.4,371.5 232.9,367.1 C229.4,362.7 229.8,359.1 228.6,352.5 C227.3,345.9 225.3,336.1 225.4,327.3 C225.5,318.6 226.8,308.7 229.0,300.0 C231.2,291.3 237.2,284.2 238.5,275.0 C239.8,265.8 236.0,255.5 236.5,245.0 C237.0,234.5 235.4,216.2 241.5,212.0Z" fill="#fcfcfc" stroke="none"/>
<path d="M238.4,275.0 C238.1,270.8 237.0,257.8 236.8,250.0 C236.6,242.2 236.2,234.3 237.0,228.0 C237.8,221.7 240.8,214.7 241.5,212.0" fill="none" stroke="#000" stroke-width="4.6"/>
<path d="M241.5,212.0 C244.2,212.5 252.8,213.7 258.0,215.0 C263.2,216.3 268.5,217.7 273.0,220.0 C277.5,222.3 281.3,225.9 285.0,229.0 C288.7,232.1 293.3,236.9 295.0,238.5" fill="none" stroke="#000" stroke-width="4.6"/>
<path d="M294.0,239.5 C296.7,239.0 304.3,237.2 310.0,236.5 C315.7,235.8 322.3,235.2 328.0,235.2 C333.7,235.2 340.0,235.8 344.0,236.5 C348.0,237.2 350.7,239.0 352.0,239.5" fill="none" stroke="#000" stroke-width="4.6"/>
<path d="M351.5,239.0 C353.2,237.3 358.5,231.8 362.0,229.0 C365.5,226.2 367.8,224.5 372.5,222.0 C377.2,219.5 384.2,216.2 390.0,214.0 C395.8,211.8 404.2,209.6 407.0,208.7" fill="none" stroke="#000" stroke-width="4.6"/>
<path d="M407.0,208.7 C407.7,210.6 410.1,214.8 411.0,220.0 C411.9,225.2 412.4,232.1 412.5,240.0 C412.6,247.9 411.6,262.9 411.4,267.5" fill="none" stroke="#000" stroke-width="4.6"/>
<path d="M243,214 Q260,228 276,246.5" fill="none" stroke="#000" stroke-width="4"/>
<path d="M405,211.5 Q385,225 369.4,243.3" fill="none" stroke="#000" stroke-width="4"/>
<path d="M406.2,268.6 C407.0,269.3 408.9,269.1 411.0,273.0 C413.1,276.9 416.8,284.5 419.0,292.0 C421.2,299.5 423.5,309.2 424.5,318.0 C425.5,326.8 425.7,337.1 425.0,345.0 C424.3,352.9 421.2,362.2 420.5,365.7" fill="none" stroke="#000" stroke-width="4.6"/>
<path d="M244.7,271.7 C243.8,272.4 241.7,271.8 239.4,276.0 C237.1,280.2 233.2,289.7 231.0,297.0 C228.8,304.3 226.8,312.8 226.0,320.0 C225.2,327.2 225.9,334.2 226.5,340.0 C227.1,345.8 228.2,351.0 229.6,355.0 C231.0,359.0 234.1,362.7 235.0,364.2" fill="none" stroke="#000" stroke-width="4.6"/>
<path d="M232.9,367.1 C235.7,369.1 240.2,375.4 249.5,378.8 C258.8,382.2 275.6,385.7 288.6,387.6 C301.6,389.6 313.1,390.7 327.7,390.5 C342.3,390.3 363.5,388.7 376.5,386.6 C389.5,384.5 398.3,381.1 405.8,377.9 C413.3,374.6 418.8,368.9 421.4,367.1" fill="none" stroke="#000" stroke-width="4.6"/>
<path d="M317.5,235 L334.8,235 C334.3,252 331.3,270 328.6,275.5 Q326.2,278.5 323.8,275.5 C321.1,270 318,252 317.5,235 Z" fill="#000"/>
<circle cx="284.2" cy="306.2" r="24.3" fill="#000"/>
<circle cx="284.2" cy="306.2" r="20.5" fill="#fcfcfc"/>
<circle cx="284.2" cy="302.5" r="18.3" fill="#000"/>
<circle cx="271.6" cy="294.6" r="5.3" fill="#fcfcfc"/>
<circle cx="293.6" cy="294.6" r="7" fill="#fcfcfc"/>
<circle cx="367.6" cy="306.2" r="24.3" fill="#000"/>
<circle cx="367.6" cy="306.2" r="20.5" fill="#fcfcfc"/>
<circle cx="367.6" cy="302.5" r="18.3" fill="#000"/>
<circle cx="355.0" cy="294.6" r="5.3" fill="#fcfcfc"/>
<circle cx="377.0" cy="294.6" r="7" fill="#fcfcfc"/>
<circle cx="324.4" cy="319.5" r="4.8" fill="none" stroke="#000" stroke-width="4.2"/>
<path d="M307,335.5 Q312,342 318,340.5 Q324,338 324.4,324.5 Q325,338 331,340.5 Q337,342 342.3,335" fill="none" stroke="#000" stroke-width="3.8"/>
<path d="M227.5,318 Q240,318 250,320.5" fill="none" stroke="#000" stroke-width="3.6"/>
<path d="M226.5,331.5 Q240,329.5 250.6,329.4" fill="none" stroke="#000" stroke-width="3.6"/>
<path d="M399,323.5 Q412,321.5 426,321.6" fill="none" stroke="#000" stroke-width="3.6"/>
<path d="M399.5,333 Q411,331.5 423.7,331" fill="none" stroke="#000" stroke-width="3.6"/>
</g>
<g class="t3" transform="translate(683.4,404.5) scale(0.42264) translate(-159,-172)"><ellipse cx="329" cy="465" rx="162.5" ry="18.5" fill="#000"/>
<path d="M161.5,398 A166.5,84 0 0 1 494.5,398 C494.5,447 436,478.5 328,478.5 C220,478.5 161.5,447 161.5,398 Z" fill="#fcfcfc" stroke="#000" stroke-width="4"/>
<path d="M163,396 C172,406 184,421.8 197,421.8 C206.2,421.8 209.8,416.5 219.0,416.5 C236.6,416.5 243.4,436.2 261.0,436.2 C269.0,436.2 272.0,431.0 280.0,431.0 C290.7,431.0 294.8,443.8 305.5,443.8 C313.3,443.8 316.2,438.0 324.0,438.0 C331.4,438.0 334.2,443.9 341.6,443.9 C353.4,443.9 357.9,431.4 369.7,431.4 C381.2,431.4 385.5,439.4 397.0,439.4 C417.8,439.4 425.7,415.0 446.5,415.0 C454.7,415.0 457.8,417.5 466.0,417.5 C475,417.5 483,410 492.5,396" fill="none" stroke="#000" stroke-width="4.3"/>
<path d="M198.2,422.4 C202.9,425.2 216.2,434.8 226.4,439.0 C236.6,443.2 242.7,445.0 259.6,447.5 C276.5,450.0 307.9,453.9 328.0,454.2 C348.1,454.5 365.2,451.6 380.0,449.5 C394.8,447.4 405.6,444.8 416.8,441.4 C428.0,438.0 439.7,431.8 447.4,429.1 C455.1,426.5 458.7,426.9 463.0,425.5 C467.3,424.1 468.8,423.8 473.2,420.5 C477.6,417.2 486.5,408.2 489.1,405.8" fill="none" stroke="#000" stroke-width="4"/>
<path d="M201.0,349.7 C201.7,349.6 204.3,349.0 205.0,348.9" fill="none" stroke="#000" stroke-width="3.9"/>
<path d="M218.4,344.2 C218.8,344.7 220.3,346.9 220.7,347.4" fill="none" stroke="#000" stroke-width="3.9"/>
<path d="M208.9,356.8 C209.8,357.2 213.5,358.8 214.4,359.2" fill="none" stroke="#000" stroke-width="3.9"/>
<path d="M188.4,367.1 C189.7,366.4 195.0,363.8 196.3,363.1" fill="none" stroke="#000" stroke-width="3.9"/>
<path d="M217.6,367.1 C218.4,367.5 221.5,369.0 222.3,369.4" fill="none" stroke="#000" stroke-width="3.9"/>
<path d="M188.4,384.4 C188.8,383.5 190.4,379.8 190.8,378.9" fill="none" stroke="#000" stroke-width="3.9"/>
<path d="M212.0,376.5 C211.5,377.3 209.0,379.9 208.9,381.3 C208.8,382.8 210.9,384.6 211.3,385.2" fill="none" stroke="#000" stroke-width="3.9"/>
<path d="M228.6,382.0 C229.3,381.4 231.9,378.8 232.6,378.1" fill="none" stroke="#000" stroke-width="3.9"/>
<path d="M223.9,393.1 C224.4,394.0 225.9,397.8 227.0,398.6 C228.1,399.4 229.7,397.9 230.2,397.8" fill="none" stroke="#000" stroke-width="3.9"/>
<path d="M246.0,398.6 C246.1,398.6 246.4,398.8 246.5,398.8" fill="none" stroke="#000" stroke-width="3.9"/>
<path d="M276.9,406.2 C277.2,405.7 278.6,403.7 278.9,403.2" fill="none" stroke="#000" stroke-width="3.9"/>
<path d="M295.4,397.4 C296.0,398.4 297.5,401.9 299.0,403.5 C300.5,405.1 303.3,406.5 304.2,407.1" fill="none" stroke="#000" stroke-width="3.9"/>
<path d="M319.8,414.0 C320.5,413.2 323.1,409.9 323.8,409.1" fill="none" stroke="#000" stroke-width="3.9"/>
<path d="M331.6,404.2 C331.9,404.7 333.2,406.6 333.5,407.1" fill="none" stroke="#000" stroke-width="3.9"/>
<path d="M349.1,404.2 C349.9,403.4 353.2,400.1 354.0,399.3" fill="none" stroke="#000" stroke-width="3.9"/>
<path d="M368.7,410.1 C369.7,410.9 373.5,414.2 374.5,415.0" fill="none" stroke="#000" stroke-width="3.9"/>
<path d="M378.4,400.3 C379.5,400.1 384.1,399.1 385.3,398.8" fill="none" stroke="#000" stroke-width="3.9"/>
<path d="M399.9,397.4 C400.9,396.8 404.8,394.1 405.8,393.5" fill="none" stroke="#000" stroke-width="3.9"/>
<path d="M397.0,408.1 C398.0,408.4 401.9,409.8 402.9,410.1" fill="none" stroke="#000" stroke-width="3.9"/>
<path d="M413.6,387.6 C413.7,387.6 413.9,387.8 414.0,387.8" fill="none" stroke="#000" stroke-width="3.9"/>
<path d="M422.4,400.3 C423.5,400.5 428.1,401.1 429.2,401.3" fill="none" stroke="#000" stroke-width="3.9"/>
<path d="M448.1,345.2 C448.2,345.3 448.4,345.5 448.5,345.6" fill="none" stroke="#000" stroke-width="3.9"/>
<path d="M435.5,355.5 C436.3,355.0 439.4,352.8 440.2,352.3" fill="none" stroke="#000" stroke-width="3.9"/>
<path d="M453.6,357.9 C454.3,357.4 456.4,355.5 458.0,355.0 C459.6,354.5 462.2,354.8 463.1,354.7" fill="none" stroke="#000" stroke-width="3.9"/>
<path d="M442.6,365.7 C443.4,366.2 446.5,368.4 447.3,368.9" fill="none" stroke="#000" stroke-width="3.9"/>
<path d="M473.3,367.3 C473.7,368.0 475.3,370.6 475.7,371.3" fill="none" stroke="#000" stroke-width="3.9"/>
<path d="M456.8,376.0 C457.7,375.6 461.4,374.0 462.3,373.6" fill="none" stroke="#000" stroke-width="3.9"/>
<path d="M433.9,376.0 C435.1,376.8 439.8,379.9 441.0,380.7" fill="none" stroke="#000" stroke-width="3.9"/>
<path d="M467.0,383.9 C468.6,384.4 474.9,386.5 476.5,387.0" fill="none" stroke="#000" stroke-width="3.9"/>
<path d="M439.4,393.3 C440.4,392.8 444.6,390.7 445.7,390.2" fill="none" stroke="#000" stroke-width="3.9"/>
<path d="M401.6,395.7 C402.1,395.3 404.2,393.7 404.7,393.3" fill="none" stroke="#000" stroke-width="3.9"/>
<path d="M241.5,212.0 C247.6,207.8 264.2,215.5 273.0,220.0 C281.8,224.5 288.3,236.3 294.0,239.0 C299.7,241.7 301.0,236.8 307.0,236.0 C313.0,235.2 322.6,233.5 330.0,234.0 C337.4,234.5 344.4,241.0 351.5,239.0 C358.6,237.0 363.2,227.1 372.5,222.0 C381.8,216.9 400.3,206.2 407.0,208.7 C413.7,211.2 411.8,227.1 412.5,237.0 C413.2,246.9 409.8,259.2 411.0,268.0 C412.2,276.8 417.7,281.3 420.0,290.0 C422.3,298.7 424.1,310.3 425.0,320.0 C425.9,329.7 425.9,340.8 425.2,348.4 C424.4,356.0 423.7,360.8 420.5,365.7 C417.3,370.6 413.1,374.4 405.8,377.9 C398.5,381.4 389.5,384.5 376.5,386.6 C363.5,388.7 342.3,390.3 327.7,390.5 C313.1,390.7 301.6,389.6 288.6,387.6 C275.6,385.7 258.8,382.2 249.5,378.8 C240.2,375.4 236.4,371.5 232.9,367.1 C229.4,362.7 229.8,359.1 228.6,352.5 C227.3,345.9 225.3,336.1 225.4,327.3 C225.5,318.6 226.8,308.7 229.0,300.0 C231.2,291.3 237.2,284.2 238.5,275.0 C239.8,265.8 236.0,255.5 236.5,245.0 C237.0,234.5 235.4,216.2 241.5,212.0Z" fill="#fcfcfc" stroke="none"/>
<path d="M238.4,275.0 C238.1,270.8 237.0,257.8 236.8,250.0 C236.6,242.2 236.2,234.3 237.0,228.0 C237.8,221.7 240.8,214.7 241.5,212.0" fill="none" stroke="#000" stroke-width="4.6"/>
<path d="M241.5,212.0 C244.2,212.5 252.8,213.7 258.0,215.0 C263.2,216.3 268.5,217.7 273.0,220.0 C277.5,222.3 281.3,225.9 285.0,229.0 C288.7,232.1 293.3,236.9 295.0,238.5" fill="none" stroke="#000" stroke-width="4.6"/>
<path d="M294.0,239.5 C296.7,239.0 304.3,237.2 310.0,236.5 C315.7,235.8 322.3,235.2 328.0,235.2 C333.7,235.2 340.0,235.8 344.0,236.5 C348.0,237.2 350.7,239.0 352.0,239.5" fill="none" stroke="#000" stroke-width="4.6"/>
<path d="M351.5,239.0 C353.2,237.3 358.5,231.8 362.0,229.0 C365.5,226.2 367.8,224.5 372.5,222.0 C377.2,219.5 384.2,216.2 390.0,214.0 C395.8,211.8 404.2,209.6 407.0,208.7" fill="none" stroke="#000" stroke-width="4.6"/>
<path d="M407.0,208.7 C407.7,210.6 410.1,214.8 411.0,220.0 C411.9,225.2 412.4,232.1 412.5,240.0 C412.6,247.9 411.6,262.9 411.4,267.5" fill="none" stroke="#000" stroke-width="4.6"/>
<path d="M243,214 Q260,228 276,246.5" fill="none" stroke="#000" stroke-width="4"/>
<path d="M405,211.5 Q385,225 369.4,243.3" fill="none" stroke="#000" stroke-width="4"/>
<path d="M406.2,268.6 C407.0,269.3 408.9,269.1 411.0,273.0 C413.1,276.9 416.8,284.5 419.0,292.0 C421.2,299.5 423.5,309.2 424.5,318.0 C425.5,326.8 425.7,337.1 425.0,345.0 C424.3,352.9 421.2,362.2 420.5,365.7" fill="none" stroke="#000" stroke-width="4.6"/>
<path d="M244.7,271.7 C243.8,272.4 241.7,271.8 239.4,276.0 C237.1,280.2 233.2,289.7 231.0,297.0 C228.8,304.3 226.8,312.8 226.0,320.0 C225.2,327.2 225.9,334.2 226.5,340.0 C227.1,345.8 228.2,351.0 229.6,355.0 C231.0,359.0 234.1,362.7 235.0,364.2" fill="none" stroke="#000" stroke-width="4.6"/>
<path d="M232.9,367.1 C235.7,369.1 240.2,375.4 249.5,378.8 C258.8,382.2 275.6,385.7 288.6,387.6 C301.6,389.6 313.1,390.7 327.7,390.5 C342.3,390.3 363.5,388.7 376.5,386.6 C389.5,384.5 398.3,381.1 405.8,377.9 C413.3,374.6 418.8,368.9 421.4,367.1" fill="none" stroke="#000" stroke-width="4.6"/>
<path d="M317.5,235 L334.8,235 C334.3,252 331.3,270 328.6,275.5 Q326.2,278.5 323.8,275.5 C321.1,270 318,252 317.5,235 Z" fill="#000"/>
<circle cx="284.2" cy="306.2" r="24.3" fill="#000"/>
<circle cx="284.2" cy="306.2" r="20.5" fill="#fcfcfc"/>
<circle cx="284.2" cy="302.5" r="18.3" fill="#000"/>
<circle cx="271.6" cy="294.6" r="5.3" fill="#fcfcfc"/>
<circle cx="293.6" cy="294.6" r="7" fill="#fcfcfc"/>
<circle cx="367.6" cy="306.2" r="24.3" fill="#000"/>
<circle cx="367.6" cy="306.2" r="20.5" fill="#fcfcfc"/>
<circle cx="367.6" cy="302.5" r="18.3" fill="#000"/>
<circle cx="355.0" cy="294.6" r="5.3" fill="#fcfcfc"/>
<circle cx="377.0" cy="294.6" r="7" fill="#fcfcfc"/>
<circle cx="324.4" cy="319.5" r="4.8" fill="none" stroke="#000" stroke-width="4.2"/>
<path d="M307,335.5 Q312,342 318,340.5 Q324,338 324.4,324.5 Q325,338 331,340.5 Q337,342 342.3,335" fill="none" stroke="#000" stroke-width="3.8"/>
<path d="M227.5,318 Q240,318 250,320.5" fill="none" stroke="#000" stroke-width="3.6"/>
<path d="M226.5,331.5 Q240,329.5 250.6,329.4" fill="none" stroke="#000" stroke-width="3.6"/>
<path d="M399,323.5 Q412,321.5 426,321.6" fill="none" stroke="#000" stroke-width="3.6"/>
<path d="M399.5,333 Q411,331.5 423.7,331" fill="none" stroke="#000" stroke-width="3.6"/></g>
<clipPath id="t4clip"><rect x="840" y="404" width="142" height="142"/></clipPath><path d="M713.4,314.9 C712.4,317.1 708.7,323.5 707.3,328.4 C705.9,333.3 705.0,339.5 705.2,344.3 C705.4,349.1 708.0,354.9 708.5,357.0" fill="none" stroke="#000" stroke-width="1.8"/>
<path d="M708.5,357 Q708,368.5 717,369 L727,368.5 Q731,367 730,362 Q729,358 724,357.5 L712,357.5" fill="#fcfcfc" stroke="#000" stroke-width="1.8"/>
<path d="M728.6,348.1 C728.6,349.3 728.4,352.8 728.8,355.5 C729.2,358.1 728.4,361.0 731.0,364.0 C733.7,367.1 739.2,371.6 744.5,373.9 C749.8,376.1 756.4,377.5 762.9,377.5 C769.5,377.5 777.8,376.7 783.8,373.9 C789.7,371.0 795.6,364.7 798.5,360.4 C801.3,356.1 800.5,350.1 800.9,348.1 Z" fill="#fcfcfc" stroke="#000" stroke-width="1.9"/>
<path d="M728.6,350.6 C731.2,352.5 738.8,359.5 744.5,362.2 C750.2,364.9 756.4,366.6 762.9,366.7 C769.5,366.9 777.8,365.6 783.8,363.1 C789.7,360.6 795.6,354.3 798.5,351.8 C801.3,349.3 800.5,348.7 800.9,348.1" fill="none" stroke="#000" stroke-width="1.7"/>
<path d="M728.6,348.7 C731.2,351.2 738.8,358.6 744.5,361.6 C750.2,364.6 756.4,366.3 762.9,366.5 C769.5,366.7 777.8,365.3 783.8,362.8 C789.7,360.4 795.5,355.1 798.5,351.8 C801.4,348.5 801.3,346.3 801.5,343.2 C801.7,340.1 801.2,337.0 799.7,333.4 C798.2,329.8 797.4,322.4 792.3,321.7 C787.2,321.1 776.0,327.8 769.0,329.7 C762.1,331.7 755.8,331.8 750.7,333.4 C745.5,335.0 742.1,337.3 738.4,339.5 C734.7,341.8 730.2,345.3 728.6,346.9 C726.9,348.4 725.9,346.3 728.6,348.7Z" fill="#fcfcfc" stroke="none"/>
<path d="M792.3,321.1 C793.6,323.0 798.2,328.4 799.7,332.2 C801.2,335.9 801.6,340.5 801.5,343.8 C801.4,347.1 799.5,350.5 799.1,351.8" fill="none" stroke="#000" stroke-width="1.9"/>
<path d="M752.1,345.7 C752.1,344.2 751.1,340.9 753.1,339.5 C755.1,338.1 760.4,337.2 764.1,337.3 C767.9,337.4 773.7,338.7 775.8,340.1 C777.9,341.5 777.8,343.8 776.6,345.7 C775.5,347.5 771.7,350.1 769.0,351.2 C766.3,352.2 763.1,352.3 760.5,351.8 C757.8,351.3 754.5,349.1 753.1,348.1 C751.7,347.1 752.1,347.1 752.1,345.7Z" fill="none" stroke="#000" stroke-width="1.9"/>
<path d="M754.6,348.1 C756.2,347.6 760.7,345.0 764.1,344.8 C767.5,344.5 773.1,346.3 774.9,346.6" fill="none" stroke="#000" stroke-width="1.6"/>
<circle cx="745.1" cy="352.4" r="0.95" fill="#000"/>
<circle cx="751.9" cy="354.2" r="0.95" fill="#000"/>
<circle cx="761.1" cy="361.0" r="0.95" fill="#000"/>
<circle cx="769.0" cy="358.5" r="0.95" fill="#000"/>
<circle cx="776.4" cy="354.2" r="0.95" fill="#000"/>
<circle cx="783.8" cy="357.3" r="0.95" fill="#000"/>
<circle cx="789.9" cy="351.2" r="0.95" fill="#000"/>
<circle cx="785.0" cy="347.5" r="0.95" fill="#000"/>
<circle cx="778.9" cy="349.3" r="0.95" fill="#000"/>
<circle cx="780.7" cy="338.3" r="0.95" fill="#000"/>
<circle cx="786.2" cy="342.0" r="0.95" fill="#000"/>
<circle cx="795.4" cy="343.8" r="0.95" fill="#000"/>
<circle cx="791.1" cy="338.3" r="0.95" fill="#000"/>
<circle cx="786.8" cy="334.6" r="0.95" fill="#000"/>
<circle cx="794.2" cy="334.6" r="0.95" fill="#000"/>
<circle cx="789.9" cy="328.5" r="0.95" fill="#000"/>
<circle cx="783.1" cy="329.1" r="0.95" fill="#000"/>
<circle cx="780.7" cy="333.4" r="0.95" fill="#000"/>
<path d="M727.4,348.1 C730.2,347.9 740.4,347.3 744.5,346.6 C748.6,346.0 750.7,345.5 752.1,344.2 C753.5,342.9 753.6,340.5 752.9,338.9 C752.1,337.3 748.5,335.3 747.6,334.6" fill="#fcfcfc" stroke="#000" stroke-width="1.8"/>
<path d="M717.8,266.6 C721.8,266.0 733.6,273.9 739.2,274.6 C744.8,275.3 747.2,271.4 751.5,271.0 C755.8,270.6 759.5,273.5 765.0,272.2 C770.5,270.9 780.7,260.4 784.6,263.0 C788.5,265.6 786.9,281.9 788.2,288.1 C789.5,294.3 791.7,295.7 792.5,300.0 C793.3,304.3 793.4,310.3 793.0,314.0 C792.6,317.7 793.0,319.4 790.0,322.0 C787.0,324.6 781.3,327.7 774.7,329.6 C768.1,331.5 758.4,333.9 750.2,333.3 C742.0,332.7 731.7,329.0 725.6,325.9 C719.5,322.8 715.5,319.2 713.4,314.9 C711.3,310.6 712.6,303.9 713.0,300.0 C713.4,296.1 715.5,295.5 715.9,291.8 C716.3,288.1 715.2,282.2 715.5,278.0 C715.8,273.8 713.8,267.2 717.8,266.6Z" fill="#fcfcfc"/>
<path d="M715.9,291.8 C715.8,289.8 714.7,284.2 715.0,280.0 C715.3,275.8 717.3,268.8 717.8,266.6" fill="none" stroke="#000" stroke-width="1.9"/>
<path d="M717.8,266.6 C719.7,267.2 725.4,268.7 729.0,270.0 C732.6,271.3 737.5,273.8 739.2,274.6" fill="none" stroke="#000" stroke-width="1.9"/>
<path d="M739.2,274.6 C741.2,274.0 747.2,271.4 751.5,271.0 C755.8,270.6 762.8,272.0 765.0,272.2" fill="none" stroke="#000" stroke-width="1.9"/>
<path d="M765.0,272.2 C766.7,271.2 771.7,267.5 775.0,266.0 C778.3,264.5 783.0,263.5 784.6,263.0" fill="none" stroke="#000" stroke-width="1.9"/>
<path d="M784.6,263.0 C785.1,265.0 786.9,270.8 787.5,275.0 C788.1,279.2 788.1,285.9 788.2,288.1" fill="none" stroke="#000" stroke-width="1.9"/>
<path d="M718.0,268.0 C720.7,270.1 734.2,276.7 734.3,280.7 C734.4,284.7 721.0,290.1 718.4,292.0" fill="none" stroke="#000" stroke-width="1.4"/>
<path d="M784.0,264.5 C781.9,266.4 770.8,272.1 771.5,276.0 C772.2,279.9 785.2,286.0 788.0,288.0" fill="none" stroke="#000" stroke-width="1.4"/>
<path d="M715.9,291.8 C715.5,293.7 713.6,299.1 713.2,303.0 C712.8,306.9 711.3,311.1 713.4,314.9 C715.5,318.7 719.5,322.8 725.6,325.9 C731.7,329.0 742.0,332.7 750.2,333.3 C758.4,333.9 768.1,331.8 774.7,329.6 C781.3,327.4 787.0,324.1 790.0,320.0 C793.0,315.9 793.3,310.3 793.0,305.0 C792.7,299.7 789.0,290.9 788.2,288.1" fill="none" stroke="#000" stroke-width="1.9"/>
<circle cx="742.3" cy="305" r="8.3" fill="#000"/>
<circle cx="739.3" cy="301" r="1.6" fill="#fff"/><circle cx="744.1" cy="301" r="1.6" fill="#fff"/>
<circle cx="774.1" cy="305" r="8.3" fill="#000"/>
<circle cx="771.1" cy="301" r="1.6" fill="#fff"/><circle cx="775.9" cy="301" r="1.6" fill="#fff"/>
<path d="M757,308.5 Q758.8,306.5 760.6,308.5 L758.8,311 Z" fill="none" stroke="#000" stroke-width="1.3"/>
<path d="M751,313 Q754.5,317.5 758.8,313.5 Q763,317.5 767.5,313" fill="none" stroke="#000" stroke-width="1.5"/>
<path d="M714,306.5 L727.5,307.5" stroke="#000" stroke-width="1.1"/>
<path d="M788,307.5 L802,306.5" stroke="#000" stroke-width="1.1"/>
<path d="M714,310.0 L727.5,310.0" stroke="#000" stroke-width="1.1"/>
<path d="M788,310.0 L802,310.0" stroke="#000" stroke-width="1.1"/>
<path d="M714,313.5 L727.5,312.5" stroke="#000" stroke-width="1.1"/>
<path d="M788,312.5 L802,313.5" stroke="#000" stroke-width="1.1"/><path d="M872.0,317.0 C870.7,318.8 865.7,324.5 864.0,328.0 C862.3,331.5 861.9,334.7 861.6,338.0 C861.4,341.3 861.8,344.5 862.5,348.0 C863.2,351.5 863.0,355.1 866.0,359.0 C869.0,362.9 872.6,368.2 880.5,371.3 C888.4,374.4 902.3,377.6 913.5,377.4 C924.7,377.2 939.7,373.2 947.7,370.0 C955.7,366.8 958.5,362.0 961.5,358.0 C964.5,354.0 965.1,349.7 965.8,346.0 C966.5,342.3 966.4,339.3 965.8,336.0 C965.2,332.7 963.8,329.2 962.0,326.0 C960.2,322.8 956.2,318.5 955.0,317.0" fill="#fcfcfc" stroke="#000" stroke-width="1.8"/>
<path d="M862.5,345.0 C863.6,345.7 866.8,347.7 869.0,349.0 C871.2,350.3 873.8,352.2 875.6,353.0 C877.4,353.8 878.4,353.0 880.0,354.0 C881.6,355.0 883.6,358.0 885.4,359.0 C887.2,360.0 889.1,360.2 891.0,360.0 C892.9,359.8 895.0,357.8 897.0,358.0 C899.0,358.2 901.0,361.0 903.0,361.5 C905.0,362.0 907.2,361.0 909.0,361.0 C910.8,361.0 911.8,361.7 913.5,361.5 C915.2,361.3 917.1,360.1 919.0,360.0 C920.9,359.9 923.0,361.3 925.0,361.0 C927.0,360.7 929.0,358.4 931.0,358.0 C933.0,357.6 935.0,358.7 937.0,358.5 C939.0,358.3 941.0,357.5 942.8,356.6 C944.6,355.7 946.2,353.8 948.0,353.0 C949.8,352.2 952.0,352.2 953.8,351.7 C955.6,351.2 957.0,350.9 959.0,350.0 C961.0,349.1 964.4,346.7 965.5,346.0" fill="none" stroke="#000" stroke-width="1.8"/>
<circle cx="867.0" cy="330.0" r="0.85" fill="#000"/>
<circle cx="866.0" cy="336.0" r="0.85" fill="#000"/>
<circle cx="871.0" cy="334.0" r="0.85" fill="#000"/>
<circle cx="874.0" cy="339.0" r="0.85" fill="#000"/>
<circle cx="870.0" cy="342.0" r="0.85" fill="#000"/>
<circle cx="877.0" cy="344.0" r="0.85" fill="#000"/>
<circle cx="888.0" cy="347.0" r="0.85" fill="#000"/>
<circle cx="896.0" cy="348.5" r="0.85" fill="#000"/>
<circle cx="902.0" cy="351.0" r="0.85" fill="#000"/>
<circle cx="908.0" cy="352.5" r="0.85" fill="#000"/>
<circle cx="915.0" cy="350.0" r="0.85" fill="#000"/>
<circle cx="920.0" cy="352.5" r="0.85" fill="#000"/>
<circle cx="926.0" cy="350.0" r="0.85" fill="#000"/>
<circle cx="933.0" cy="349.0" r="0.85" fill="#000"/>
<circle cx="940.0" cy="348.5" r="0.85" fill="#000"/>
<circle cx="945.0" cy="344.0" r="0.85" fill="#000"/>
<circle cx="952.0" cy="342.0" r="0.85" fill="#000"/>
<circle cx="958.0" cy="338.0" r="0.85" fill="#000"/>
<circle cx="961.0" cy="332.0" r="0.85" fill="#000"/>
<circle cx="957.0" cy="330.0" r="0.85" fill="#000"/>
<path d="M882.5,268.4 C886.1,266.1 894.2,273.9 898.4,274.8 C902.5,275.7 904.8,274.2 907.4,273.5 C910.0,272.8 911.7,270.9 914.0,270.5 C916.3,270.1 919.1,270.2 921.4,271.0 C923.7,271.8 924.0,276.1 927.8,275.4 C931.6,274.6 940.4,264.3 944.4,266.5 C948.4,268.7 949.4,283.2 951.5,288.8 C953.6,294.4 955.6,295.2 957.2,300.3 C958.8,305.4 961.0,315.0 961.0,319.5 C961.0,324.0 960.6,323.8 957.4,327.3 C954.2,330.9 948.7,338.0 941.6,340.8 C934.5,343.6 922.9,344.2 914.7,344.4 C906.6,344.6 899.4,344.0 892.7,342.0 C886.0,340.0 878.5,335.9 874.4,332.2 C870.3,328.5 869.4,322.3 868.3,320.0 C867.2,317.7 867.5,321.1 867.8,318.2 C868.1,315.3 868.8,307.8 870.3,302.9 C871.8,298.0 874.7,294.6 876.7,288.8 C878.7,283.1 878.9,270.7 882.5,268.4Z" fill="#fcfcfc"/>
<path d="M876.7,288.8 C877.0,287.0 877.5,281.4 878.5,278.0 C879.5,274.6 880.6,269.6 882.5,268.4 C884.4,267.2 887.4,269.9 890.0,271.0 C892.6,272.1 895.5,274.4 898.4,274.8 C901.3,275.2 905.9,273.7 907.4,273.5" fill="none" stroke="#000" stroke-width="1.9"/>
<path d="M907.0,273.5 C907.4,272.9 908.7,270.8 909.5,270.0 C910.3,269.2 911.4,268.3 912.0,268.5 C912.6,268.7 912.3,271.0 913.0,271.0 C913.7,271.0 915.2,268.4 916.0,268.5 C916.8,268.6 917.1,271.1 918.0,271.5 C918.9,271.9 919.8,270.4 921.4,271.0 C923.0,271.6 926.7,274.7 927.8,275.4" fill="none" stroke="#000" stroke-width="1.6"/>
<path d="M927.8,275.4 C929.2,274.5 933.2,271.5 936.0,270.0 C938.8,268.5 942.3,265.3 944.4,266.5 C946.5,267.7 947.3,273.3 948.5,277.0 C949.7,280.7 951.0,286.8 951.5,288.8" fill="none" stroke="#000" stroke-width="1.9"/>
<path d="M876.7,288.8 C875.6,291.1 871.8,298.0 870.3,302.9 C868.8,307.8 867.8,314.0 867.8,318.2 C867.8,322.4 868.0,324.9 870.0,328.0 C872.0,331.1 876.2,334.2 880.0,336.5 C883.8,338.8 886.9,340.7 892.7,342.0 C898.5,343.3 906.6,344.6 914.7,344.4 C922.9,344.2 935.2,342.9 941.6,340.8 C948.0,338.7 949.9,335.5 953.0,332.0 C956.1,328.5 959.3,325.3 960.0,320.0 C960.7,314.7 958.6,305.5 957.2,300.3 C955.8,295.1 952.5,290.7 951.5,288.8" fill="none" stroke="#000" stroke-width="1.9"/>
<path d="M884,282 L886,279 L887,281 L889,279.5" fill="none" stroke="#000" stroke-width="1"/>
<path d="M941,278 L943,281 L945,279" fill="none" stroke="#000" stroke-width="1"/>
<circle cx="899.1" cy="298.4" r="8.3" fill="#000"/>
<circle cx="899.1" cy="294.8" r="2.6" fill="#fff"/><circle cx="895.5" cy="300.8" r="1.5" fill="#fff"/>
<circle cx="930.4" cy="298.4" r="8.3" fill="#000"/>
<circle cx="930.4" cy="294.8" r="2.6" fill="#fff"/><circle cx="926.8" cy="300.8" r="1.5" fill="#fff"/>
<ellipse cx="888.2" cy="311.8" rx="6.3" ry="4.3" fill="none" stroke="#000" stroke-width="1.1"/>
<ellipse cx="941.9" cy="311.8" rx="6.3" ry="4.3" fill="none" stroke="#000" stroke-width="1.1"/>
<path d="M912.5,304 L916.5,304 L914.5,306.5Z" fill="#000" stroke="#000" stroke-width="1"/>
<path d="M908,309 Q911,312.5 914.5,309.5 Q918,312.5 921,309" fill="none" stroke="#000" stroke-width="1.4"/><g clip-path="url(#t4clip)"><ellipse cx="911" cy="493" rx="49" ry="43" fill="#fcfcfc" stroke="#000" stroke-width="1.8"/>
<path d="M863.0,501.0 C863.8,502.0 866.3,505.2 868.0,507.0 C869.7,508.8 871.5,510.6 873.2,511.9 C874.9,513.2 876.4,513.8 878.0,515.0 C879.6,516.2 881.0,517.9 883.0,518.9 C885.0,519.9 887.7,520.3 890.0,521.0 C892.3,521.7 894.7,522.6 897.0,523.0 C899.3,523.4 901.7,523.2 904.0,523.5 C906.3,523.8 908.7,524.6 911.0,524.5 C913.3,524.4 915.2,523.8 918.0,523.0 C920.8,522.2 924.3,521.8 928.0,520.0 C931.7,518.2 936.0,515.0 940.0,512.0 C944.0,509.0 949.0,504.7 952.0,502.0 C955.0,499.3 957.0,497.0 958.0,496.0" fill="none" stroke="#000" stroke-width="1.8"/>
<ellipse cx="912" cy="498.2" rx="11" ry="4.6" fill="#e4e4e4"/>
<path d="M903,494 Q900.5,498 903,502 L904.5,502 L904.5,494Z" fill="#000"/>
<path d="M873.0,483.0 L876.0,481.0" stroke="#000" stroke-width="1.5"/>
<path d="M884.0,494.0 L887.0,492.0" stroke="#000" stroke-width="1.5"/>
<path d="M890.0,501.0 L893.0,499.5" stroke="#000" stroke-width="1.5"/>
<path d="M901.0,509.0 L902.0,506.0" stroke="#000" stroke-width="1.5"/>
<path d="M880,459 Q885,440 895,432 Q914,424 934,432 Q946,442 952,458 Q930,468 914,468 Q896,468 880,459Z" fill="#fcfcfc"/>
<path d="M883.2,418.0 L893.5,422.5 L902.6,425.9 L904.3,421.4 L908.3,424.2 L912.8,420.3 L915.7,422.5 L918.5,421.4 L920.8,424.2 L926.5,425.9 L943.6,417.4 L944.7,427.1 L944.7,436.2 L948.1,443.0 L949.9,446.4 L955.0,453.8 L949.3,452.4 L952.1,455.8 L944.7,455.0 L939.0,455.8 L933.9,456.7 L933.3,453.3 L932.2,445.3 L928.2,440.8 L921.9,437.3 L919.9,434.1 L917.4,436.8 L914.0,432.6 L911.7,436.8 L908.3,434.1 L906.0,438.5 L899.2,441.9 L895.2,446.4 L894.4,453.3 L895.8,457.8 L887.8,457.3 L880.9,456.9 L883.2,454.6 L877.3,453.5 L880.0,449.3 L878.4,446.7 L882.7,441.0 L884.4,437.3 L883.2,427.1 Z" fill="#000" stroke="#000" stroke-width="0.6"/>
<path d="M885.5,423 L893.5,431.6 L886.5,437 Z" fill="#fff"/>
<path d="M941.5,422 L934.5,431.1 L942,436 Z" fill="#fff"/>
<circle cx="902.0" cy="449.3" r="7.6" fill="#000"/>
<circle cx="902.0" cy="449.3" r="6.5" fill="#fff"/>
<circle cx="902.0" cy="449.3" r="5.2" fill="#000"/>
<circle cx="902.0" cy="448.2" r="1.8" fill="#fff"/>
<circle cx="926.5" cy="449.3" r="7.6" fill="#000"/>
<circle cx="926.5" cy="449.3" r="6.5" fill="#fff"/>
<circle cx="926.5" cy="449.3" r="5.2" fill="#000"/>
<circle cx="926.5" cy="448.2" r="1.8" fill="#fff"/>
<path d="M912,455 L916,455 L914,457.5Z" fill="#000" stroke="#000" stroke-width="1"/>
<path d="M907.5,459 Q910.5,462.5 914,459.5 Q917.5,462.5 920.5,459" fill="none" stroke="#000" stroke-width="1.4"/>
<path d="M870.5,459.0 Q882,456.5 896,456.5" fill="none" stroke="#222" stroke-width="0.8"/>
<path d="M933,456.5 Q945,456.5 957,459.0" fill="none" stroke="#222" stroke-width="0.8"/>
<path d="M870.5,461.5 Q882,459.0 896,459.0" fill="none" stroke="#222" stroke-width="0.8"/>
<path d="M933,459.0 Q945,459.0 957,461.5" fill="none" stroke="#222" stroke-width="0.8"/>
<path d="M870.5,464.0 Q882,461.5 896,461.5" fill="none" stroke="#222" stroke-width="0.8"/>
<path d="M933,461.5 Q945,461.5 957,464.0" fill="none" stroke="#222" stroke-width="0.8"/>
<path d="M883,471 Q881,465 886,463.5 Q891,462 893,466 Q894,471 889,472.5 Q885,473 883,471Z" fill="#fcfcfc" stroke="#000" stroke-width="1.6"/>
<path d="M928,471 Q926,465 931,463.5 Q936,462 938,466 Q939,471 934,472.5 Q930,473 928,471Z" fill="#fcfcfc" stroke="#000" stroke-width="1.6"/></g><circle cx="946.6" cy="501" r="46.4" fill="#fbfbfb" fill-opacity="0.9"/>
<path d="M932.8,505 L932.8,513.3 L941,513.3 M932.8,513.3 L944,502 M950,496 L963,483.8 M955,483.8 L963,483.8 L963,492" fill="none" stroke="#000" stroke-width="2.7" stroke-linecap="butt" stroke-linejoin="miter"/>
</svg>
</body></html>
